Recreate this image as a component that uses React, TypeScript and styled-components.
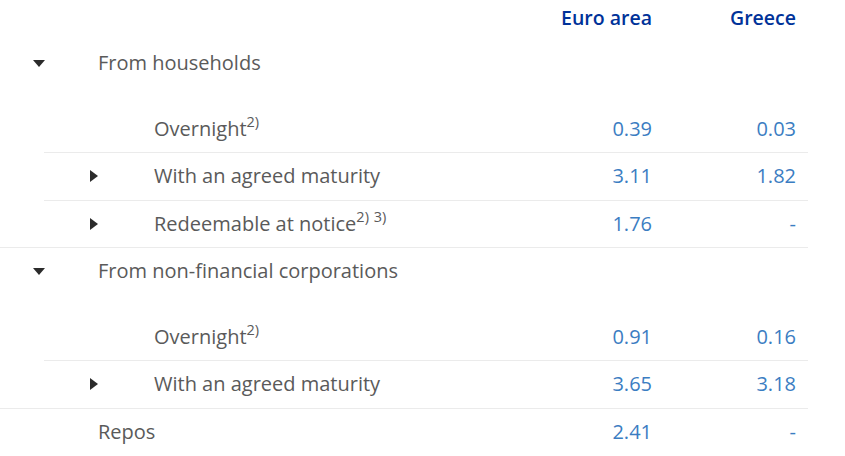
import React from "react";
import styled, { createGlobalStyle } from "styled-components";

const Global = createGlobalStyle`
  html, body { margin: 0; padding: 0; background: #ffffff; }
  body { font-family: "Open Sans", "Liberation Sans", sans-serif; }
`;

const Table = styled.div`
  width: 808px;
  display: flex;
  flex-direction: column;
`;

const HeaderRow = styled.div`
  display: grid;
  grid-template-columns: 1fr 144px 144px;
  padding-right: 12px;
  height: 39px;
  box-sizing: border-box;
  padding-top: 5px;
`;

const HeaderCell = styled.div`
  font-size: 19.5px;
  font-weight: 600;
  line-height: 26px;
  color: #003299;
  text-align: right;
`;

const Row = styled.div<{ $indent: number; $divider: boolean; $group: boolean }>`
  display: grid;
  grid-template-columns: 1fr 144px 144px;
  align-items: start;
  box-sizing: border-box;
  height: ${(p) => (p.$group ? "65.5px" : "47.5px")};
  margin-left: ${(p) => p.$indent}px;
  padding-right: 12px;
  border-top: ${(p) => (p.$divider ? "1px solid #ebebeb" : "none")};
  padding-top: ${(p) => (p.$divider ? 11 : 12)}px;
  font-size: 20px;
  line-height: 24px;
`;

const LabelCell = styled.div<{ $toggleWidth: number }>`
  display: grid;
  grid-template-columns: ${(p) => p.$toggleWidth}px 1fr;
  align-items: center;
  color: #5a5a5a;
  white-space: nowrap;
`;

const Toggle = styled.span<{ $width: number }>`
  display: flex;
  align-items: center;
  justify-content: center;
  width: ${(p) => p.$width}px;
  height: 24px;
`;

const Sup = styled.sup`
  font-size: 14.5px;
  line-height: 0;
  position: relative;
  top: -1px;
  vertical-align: super;
  word-spacing: 1px;
`;

const Value = styled.div`
  text-align: right;
  color: #3b7dc2;
`;

const DownArrow = () => (
  <svg width="12" height="7" viewBox="0 0 12 7">
    <polygon points="0,0 12,0 6,7" fill="#2b2b2b" />
  </svg>
);

const RightArrow = () => (
  <svg width="8" height="12" viewBox="0 0 8 12">
    <polygon points="0,0 8,6 0,12" fill="#2b2b2b" />
  </svg>
);

type RowData = {
  label: string;
  sup?: string;
  level: 0 | 1;
  toggle?: "down" | "right";
  group?: boolean;
  divider: boolean;
  euro?: string;
  greece?: string;
};

const rows: RowData[] = [
  { label: "From households", level: 0, toggle: "down", group: true, divider: false },
  { label: "Overnight", sup: "2)", level: 1, divider: false, euro: "0.39", greece: "0.03" },
  { label: "With an agreed maturity", level: 1, toggle: "right", divider: true, euro: "3.11", greece: "1.82" },
  { label: "Redeemable at notice", sup: "2) 3)", level: 1, toggle: "right", divider: true, euro: "1.76", greece: "-" },
  { label: "From non-financial corporations", level: 0, toggle: "down", group: true, divider: true },
  { label: "Overnight", sup: "2)", level: 1, divider: false, euro: "0.91", greece: "0.16" },
  { label: "With an agreed maturity", level: 1, toggle: "right", divider: true, euro: "3.65", greece: "3.18" },
  { label: "Repos", level: 0, divider: true, euro: "2.41", greece: "-" },
];

export default function App() {
  return (
    <>
      <Global />
      <Table>
        <HeaderRow>
          <div />
          <HeaderCell>Euro area</HeaderCell>
          <HeaderCell>Greece</HeaderCell>
        </HeaderRow>
        {rows.map((r, i) => (
          <Row key={i} $indent={r.level === 0 ? 0 : 44} $divider={r.divider} $group={!!r.group}>
            <LabelCell $toggleWidth={r.level === 0 ? 98 : 110}>
              <Toggle $width={r.level === 0 ? 77 : 100}>
                {r.toggle === "down" && <DownArrow />}
                {r.toggle === "right" && <RightArrow />}
              </Toggle>
              <span>
                {r.label}
                {r.sup && <Sup>{r.sup}</Sup>}
              </span>
            </LabelCell>
            <Value>{r.euro ?? ""}</Value>
            <Value>{r.greece ?? ""}</Value>
          </Row>
        ))}
      </Table>
    </>
  );
}
